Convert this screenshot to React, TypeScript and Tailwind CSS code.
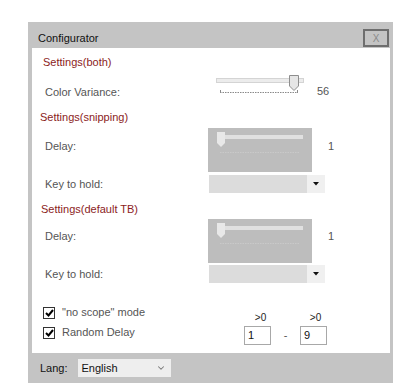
import { ChevronDown } from 'lucide-react';

function ActiveSlider() {
  return (
    <svg width="104" height="20" viewBox="0 0 104 20">
      <rect x="8.5" y="3.5" width="87" height="4" fill="#ececec" stroke="#d4d4d4" />
      <line x1="12" y1="17.5" x2="90" y2="17.5" stroke="#8a8a8a" strokeDasharray="1.5 1" />
      <line x1="12.5" y1="15" x2="12.5" y2="18" stroke="#8a8a8a" />
      <line x1="89.5" y1="15" x2="89.5" y2="18" stroke="#8a8a8a" />
      <path d="M81.5 0.5 H90.5 V11 L86 15.5 L81.5 11 Z" fill="#e6e6e6" stroke="#8e8e8e" />
    </svg>
  );
}

function DisabledSlider() {
  return (
    <div className="w-[104px] h-[44px] bg-[#bdbdbd]">
      <svg width="104" height="44" viewBox="0 0 104 44">
        <rect x="9" y="7" width="86" height="4" fill="#e0e0e0" />
        <line x1="12" y1="24.5" x2="92" y2="24.5" stroke="#c9c9c9" strokeDasharray="1.5 1" />
        <path d="M9 4 H17 V15 L13 19 L9 15 Z" fill="#e8e8e8" />
      </svg>
    </div>
  );
}

function Combo() {
  return (
    <div className="flex w-[116px] h-[18px]">
      <div className="w-[98px] h-full bg-[#dcdcdc]" />
      <div className="w-[18px] h-full bg-[#f0f0f0] flex items-center justify-center">
        <svg width="6" height="4" viewBox="0 0 6 4">
          <path d="M0 0 H6 L3 3.5 Z" fill="#111" />
        </svg>
      </div>
    </div>
  );
}

function Check({ label }: { label: string }) {
  return (
    <div className="flex items-center h-[13px]">
      <div className="w-[12px] h-[12px] border border-[#333] bg-white flex items-center justify-center">
        <svg width="9" height="8" viewBox="0 0 9 8">
          <path d="M1 4 L3.5 6.5 L8 1" fill="none" stroke="#000" strokeWidth="2" />
        </svg>
      </div>
      <span className="ml-[7px] text-[#555]">{label}</span>
    </div>
  );
}

function Header({ text, className }: { text: string; className: string }) {
  return <div className={`h-[13px] text-[#8b1c1c] ${className}`}>{text}</div>;
}

export default function App() {
  return (
    <div className="w-[411px] h-[392px] bg-white pt-[22px] pl-[28px] font-['Liberation_Sans',Arial,sans-serif] text-[11px] leading-[13px]">
      <div className="w-[365px] bg-[#c4c4c4]">
        {/* title bar */}
        <div className="h-[26px] flex items-start">
          <span className="ml-[10px] mt-[10px] text-[#111]">Configurator</span>
          <div className="ml-auto mr-[4px] mt-[7px] w-[26px] h-[18px] border-2 border-[#6e6e6e] flex items-center justify-center text-[#8a8a8a] text-[10px]">
            X
          </div>
        </div>

        {/* content */}
        <div className="ml-[4px] w-[358px] h-[305px] bg-white flex flex-col">
          <Header text="Settings(both)" className="mt-[8px] ml-[11px]" />

          <div className="flex h-[24px] mt-[5px]">
            <span className="w-[176px] pl-[13px] mt-[12px] text-[#555]">Color Variance:</span>
            <div className="mt-[1px]">
              <ActiveSlider />
            </div>
            <span className="ml-[5px] mt-[11px] text-[#555]">56</span>
          </div>

          <Header text="Settings(snipping)" className="mt-[13px] ml-[8px]" />

          <div className="flex h-[44px] mt-[4px]">
            <span className="w-[176px] pl-[13px] mt-[12px] text-[#555]">Delay:</span>
            <DisabledSlider />
            <span className="ml-[16px] mt-[12px] text-[#555]">1</span>
          </div>

          <div className="flex h-[18px] mt-[3px] items-center">
            <span className="w-[177px] pl-[13px] text-[#555]">Key to hold:</span>
            <Combo />
          </div>

          <Header text="Settings(default TB)" className="mt-[10px] ml-[9px]" />

          <div className="flex h-[44px] mt-[3px]">
            <span className="w-[176px] pl-[13px] mt-[11px] text-[#555]">Delay:</span>
            <DisabledSlider />
            <span className="ml-[16px] mt-[11px] text-[#555]">1</span>
          </div>

          <div className="flex h-[18px] mt-[2px] items-center">
            <span className="w-[177px] pl-[13px] text-[#555]">Key to hold:</span>
            <Combo />
          </div>

          <div className="flex mt-[23px]">
            <div className="w-[212px] pl-[11px] flex flex-col gap-[7px]">
              <Check label={'"no scope" mode'} />
              <Check label="Random Delay" />
            </div>
            <div className="flex items-end mt-[5px]">
              <div className="flex flex-col items-center w-[27px]">
                <span className="text-[#222] text-[10px] ml-[6px]">&gt;0</span>
                <div className="mt-[2px] w-[27px] h-[19px] border border-[#a8a8a8] text-[#111] pl-[3px] flex items-center">1</div>
              </div>
              <span className="w-[29px] h-[19px] flex items-center justify-center text-[#555]">-</span>
              <div className="flex flex-col items-center w-[27px]">
                <span className="text-[#222] text-[10px] ml-[4px]">&gt;0</span>
                <div className="mt-[2px] w-[27px] h-[19px] border border-[#a8a8a8] text-[#111] pl-[3px] flex items-center">9</div>
              </div>
            </div>
          </div>
        </div>

        {/* bottom bar */}
        <div className="h-[30px] flex items-center">
          <span className="ml-[12px] text-[#111]">Lang:</span>
          <div className="ml-[10px] w-[93px] h-[18px] bg-[#eeeeee] flex items-center pl-[4px]">
            <span className="text-[#111]">English</span>
            <ChevronDown className="ml-auto mr-[5px] text-[#777]" size={10} strokeWidth={2.5} />
          </div>
        </div>
      </div>
    </div>
  );
}
